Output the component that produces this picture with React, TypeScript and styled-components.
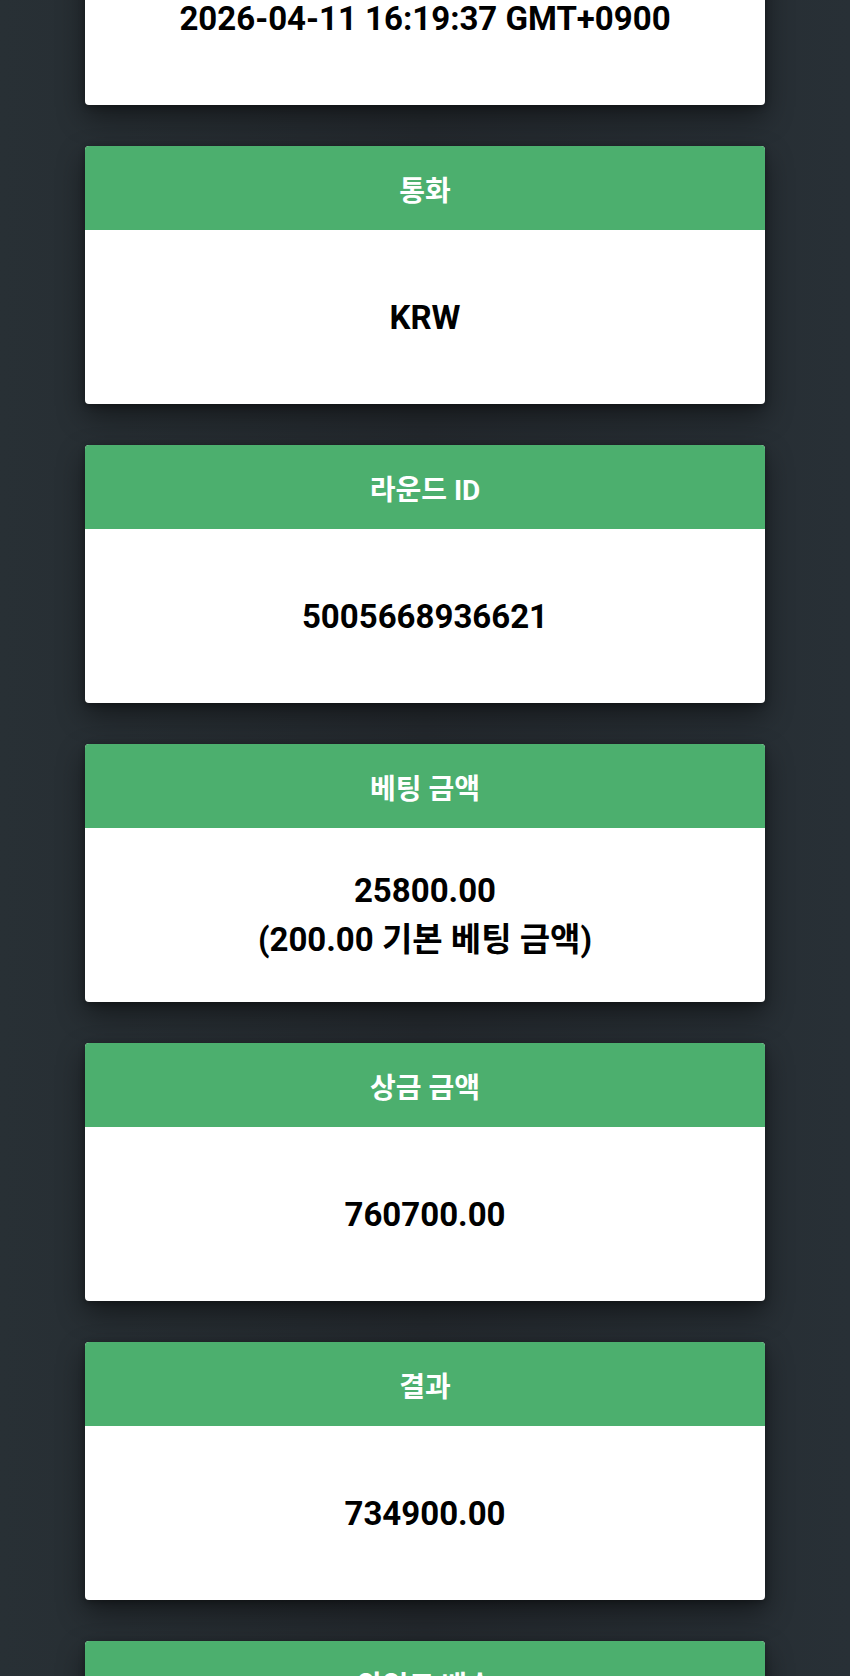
import React from "react";
import styled, { createGlobalStyle } from "styled-components";

const GlobalStyle = createGlobalStyle`
  html, body {
    margin: 0;
    padding: 0;
    background: #272d32;
  }
  body {
    font-family: Roboto, "Noto Sans CJK KR", "Noto Sans", sans-serif;
    -webkit-font-smoothing: antialiased;
  }
`;

const Page = styled.div`
  height: 1676px;
  background: linear-gradient(90deg, #283035 0%, #24292e 50%, #283036 100%);
  overflow: hidden;
`;

const List = styled.div`
  display: flex;
  flex-direction: column;
  align-items: center;
  gap: 41px;
  margin-top: -153px;
`;

const Card = styled.section`
  width: 680px;
  border-radius: 4px;
  overflow: hidden;
  background: #ffffff;
  box-shadow: 0 12px 28px rgba(0, 0, 0, 0.45), 0 2px 6px rgba(0, 0, 0, 0.3);
`;

const Header = styled.h2`
  margin: 0;
  box-sizing: border-box;
  height: 84px;
  padding-top: 8px;
  display: flex;
  align-items: center;
  justify-content: center;
  background: #4caf6e;
  color: #ffffff;
  font-size: 28px;
  font-weight: 700;
  line-height: 1;
`;

const Body = styled.div`
  height: 174px;
  display: flex;
  flex-direction: column;
  align-items: center;
  justify-content: center;
  color: #000000;
  font-size: 33px;
  font-weight: 700;
  line-height: 49px;
  text-align: center;
`;

type Item = { label: string; lines: string[] };

const items: Item[] = [
  { label: "베팅 시간", lines: ["2026-04-11 16:19:37 GMT+0900"] },
  { label: "통화", lines: ["KRW"] },
  { label: "라운드 ID", lines: ["5005668936621"] },
  { label: "베팅 금액", lines: ["25800.00", "(200.00 기본 베팅 금액)"] },
  { label: "상금 금액", lines: ["760700.00"] },
  { label: "결과", lines: ["734900.00"] },
  { label: "와일드 배수", lines: [] },
];

export default function App() {
  return (
    <Page>
      <GlobalStyle />
      <List>
        {items.map((it) => (
          <Card key={it.label}>
            <Header>{it.label}</Header>
            <Body>
              {it.lines.map((l) => (
                <div key={l}>{l}</div>
              ))}
            </Body>
          </Card>
        ))}
      </List>
    </Page>
  );
}
